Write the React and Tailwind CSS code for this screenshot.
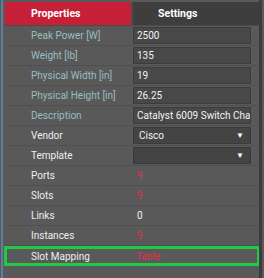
const rows = [
  { label: "Peak Power [W]", teal: true, input: "2500" },
  { label: "Weight [lb]", teal: true, input: "135" },
  { label: "Physical Width [in]", teal: true, input: "19" },
  { label: "Physical Height [in]", teal: true, input: "26.25" },
  { label: "Description", teal: true, input: "Catalyst 6009 Switch Chassis" },
  { label: "Vendor", select: "Cisco" },
  { label: "Template", select: "" },
  { label: "Ports", value: "9", red: true },
  { label: "Slots", value: "9", red: true },
  { label: "Links", value: "0" },
  { label: "Instances", value: "9", red: true },
];

function Row({ row }) {
  return (
    <div className="flex h-[20px] items-center border-b border-[#4f4f4f]">
      <div
        className={`w-[127px] shrink-0 pl-[26px] truncate ${
          row.teal ? "text-[#96bfc0]" : "text-[#eeeeee]"
        }`}
      >
        {row.label}
      </div>
      <div className="flex-1 min-w-0 pr-[8px] pl-[1px]">
        {row.input !== undefined && (
          <div className="h-[17px] bg-[#484848] border border-[#3c3c3c] px-[3px] leading-[15px] text-[#f2f2f2] whitespace-nowrap overflow-hidden">
            {row.input}
          </div>
        )}
        {row.select !== undefined && (
          <div className="h-[17px] bg-[#444444] border border-[#3a3a3a] pl-[5px] pr-[6px] flex items-center justify-between text-[#f2f2f2]">
            <span>{row.select}</span>
            <span className="text-[8px] text-white">▼</span>
          </div>
        )}
        {row.value !== undefined && (
          <div
            className={`pl-[4px] ${
              row.red ? "text-[#e0304e]" : "text-[#f2f2f2]"
            }`}
          >
            {row.value}
          </div>
        )}
      </div>
    </div>
  );
}

export default function App() {
  return (
    <div
      className="w-[264px] h-[278px] bg-[#595959] flex overflow-hidden text-[10px]"
      style={{ fontFamily: "Roboto, 'Liberation Sans', sans-serif" }}
    >
      <div className="w-[2px] ml-[1px] bg-[#5f7f9c]" />
      <div className="w-[2px]" />
      <div className="w-[254px] flex flex-col pt-[2px]">
        {/* Tabs */}
        <div className="flex h-[24px] border-b border-[#4a4a4a]">
          <div className="w-[126px] bg-[#c61f38] text-white font-bold text-[10.5px] pl-[26px] flex items-center">
            Properties
          </div>
          <div className="w-[2px] bg-[#4d4d4d]" />
          <div className="flex-1 bg-[#3e3e3e] text-white font-bold text-[10.5px] pl-[25px] flex items-center">
            Settings
          </div>
        </div>

        {rows.map((row) => (
          <Row key={row.label} row={row} />
        ))}

        {/* Slot Mapping */}
        <div className="h-[20px] flex items-center border-[3px] border-[#22c944] -mx-[1px]">
          <div className="w-[125px] shrink-0 pl-[24px] text-[#eeeeee]">Slot Mapping</div>
          <div className="pl-[4px] text-[#e0304e]">Table</div>
        </div>
      </div>
      <div className="w-[3px] bg-[#3c3c3c]" />
    </div>
  );
}
